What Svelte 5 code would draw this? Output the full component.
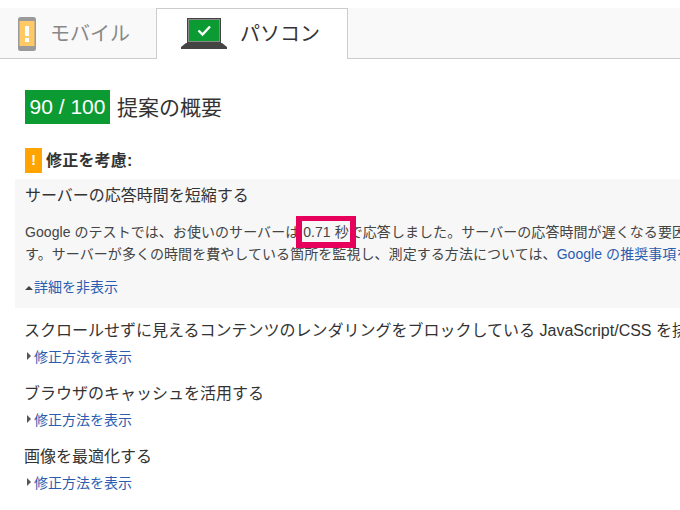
<script>
const rules = [
    "スクロールせずに見えるコンテンツのレンダリングをブロックしている JavaScript/CSS を排",
    "ブラウザのキャッシュを活用する",
    "画像を最適化する"
];
</script>

<div class="page">
    <div class="tabs">
        <div class="tab">
            <svg class="phone" width="18" height="34" viewBox="0 0 18 34">
                <rect width="18" height="34" rx="2.5" fill="#9a9a9a"/>
                <rect x="1.5" y="4" width="15" height="25" fill="#ffc966"/>
                <rect x="7" y="9" width="4" height="10" fill="#fff"/>
                <rect x="7" y="21" width="4" height="4" fill="#fff"/>
            </svg>
            <span class="tab-label">モバイル</span>
        </div>
        <div class="tab active">
            <svg class="laptop" width="46" height="31" viewBox="0 0 46 31">
                <rect x="6" y="0" width="34" height="25" fill="#444"/>
                <rect x="7" y="1" width="32" height="23" fill="#8a8a8a"/>
                <rect x="8" y="2" width="30" height="21" fill="#0c9b33"/>
                <path d="M17.5 12.5l4 4 7.5-8" fill="none" stroke="#fff" stroke-width="2.4"/>
                <path d="M5 25h36l5 4v2H0v-2z" fill="#444"/>
            </svg>
            <span class="tab-label">パソコン</span>
        </div>
        <div class="rest"></div>
    </div>

    <div class="summary">
        <span class="score">90 / 100</span>
        <span class="summary-title">提案の概要</span>
    </div>

    <div class="consider">
        <span class="warn">!</span>
        <span class="consider-label">修正を考慮:</span>
    </div>

    <div class="open-rule">
        <div class="rule-title">サーバーの応答時間を短縮する</div>
        <p class="desc">Google のテストでは、お使いのサーバーは 0.71 秒で応答しました。サーバーの応答時間が遅くなる要因<br>す。サーバーが多くの時間を費やしている箇所を監視し、測定する方法については、<a href="#top">Google の推奨事項を</a></p>
        <div class="toggle"><i class="arrow-up"></i><a href="#top">詳細を非表示</a></div>
    </div>

    <div class="rules">
        {#each rules as rule}
            <div class="rule">
                <div class="rule-title">{rule}</div>
                <div class="toggle"><i class="arrow-right"></i><a href="#top">修正方法を表示</a></div>
            </div>
        {/each}
    </div>

    <div class="highlight"></div>
</div>

<style>
    :global(body) {
        background: #fff;
    }
    .page {
        position: relative;
        width: 680px;
        height: 510px;
        overflow: hidden;
        padding-top: 8px;
        box-sizing: border-box;
        font-family: "Liberation Sans", "Noto Sans CJK JP", sans-serif;
        color: #333;
        white-space: nowrap;
    }
    .tabs {
        display: flex;
        height: 51px;
        box-sizing: border-box;
    }
    .tab {
        display: flex;
        align-items: center;
        width: 156px;
        padding-left: 18px;
        box-sizing: border-box;
        background: #f9f9f9;
        border-top: 1px solid #f9f9f9;
        border-bottom: 1px solid #ccc;
        font-size: 20px;
        color: #888;
    }
    .tab-label {
        padding-bottom: 3px;
    }
    .phone {
        margin-right: 14px;
    }
    .tab.active {
        width: 192px;
        padding-left: 24px;
        background: #fff;
        color: #333;
        border: 1px solid #ccc;
        border-bottom: none;
    }
    .laptop {
        margin-right: 13px;
        margin-bottom: 1px;
    }
    .rest {
        flex: 1;
        background: #f9f9f9;
        border-top: 1px solid #f9f9f9;
        border-bottom: 1px solid #ccc;
    }
    .summary {
        display: flex;
        align-items: center;
        margin: 31px 0 0 25px;
        height: 34px;
    }
    .score {
        width: 85px;
        height: 34px;
        line-height: 34px;
        text-align: center;
        background: #0c9b33;
        color: #fff;
        font-size: 21px;
    }
    .summary-title {
        margin-left: 7px;
        padding-bottom: 2px;
        font-size: 21px;
    }
    .consider {
        display: flex;
        align-items: center;
        gap: 4px;
        margin: 24px 0 0 25px;
        height: 25px;
        font-size: 16px;
        font-weight: 700;
    }
    .consider-label {
        padding-bottom: 3px;
        letter-spacing: 0.2px;
    }
    .warn {
        width: 17px;
        height: 25px;
        line-height: 25px;
        text-align: center;
        background: #ffa400;
        color: #fff;
        font-size: 14px;
    }
    .open-rule {
        margin: 6px 0 0 15px;
        height: 129px;
        padding: 5px 0 0 10px;
        box-sizing: border-box;
        background: #f7f7f7;
    }
    .rule-title {
        height: 24px;
        line-height: 24px;
        font-size: 16px;
        color: #333;
    }
    .desc {
        margin: 13px 0 0;
        font-size: 14px;
        line-height: 22px;
        letter-spacing: 0.06px;
        color: #444;
    }
    .desc a, .toggle a {
        color: #2a5db0;
        text-decoration: none;
    }
    .toggle {
        display: flex;
        align-items: center;
        height: 20px;
        font-size: 14px;
    }
    .open-rule .toggle {
        margin-top: 11px;
    }
    .arrow-up {
        width: 0;
        height: 0;
        margin-top: 3px;
        margin-right: 1px;
        border-left: 4px solid transparent;
        border-right: 4px solid transparent;
        border-bottom: 4px solid #444;
    }
    .arrow-right {
        width: 0;
        height: 0;
        margin: 0 3px 0 2px;
        border-top: 4px solid transparent;
        border-bottom: 4px solid transparent;
        border-left: 4px solid #555;
    }
    .rules {
        display: flex;
        flex-direction: column;
        gap: 16px;
        margin: 11px 0 0 25px;
    }
    .rule .toggle {
        margin-top: 3px;
    }
    .rule .rule-title {
        margin-left: -1px;
    }
    .highlight {
        position: absolute;
        left: 296px;
        top: 216px;
        width: 60px;
        height: 32px;
        box-sizing: border-box;
        border-style: solid;
        border-width: 5px 6px 6px;
        border-color: #e6005c;
    }
</style>
